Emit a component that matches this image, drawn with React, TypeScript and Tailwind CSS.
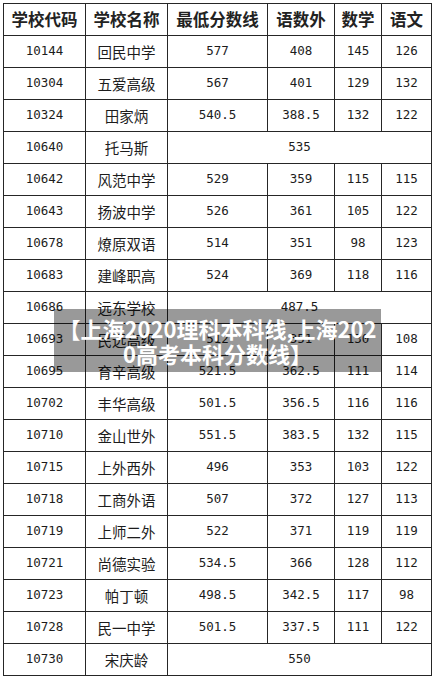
type Row = {
  code: string
  name: string
  total: string
  cem?: string
  math?: string
  chinese?: string
}

const rows: Row[] = [
  { code: '10144', name: '回民中学', total: '577', cem: '408', math: '145', chinese: '126' },
  { code: '10304', name: '五爱高级', total: '567', cem: '401', math: '129', chinese: '132' },
  { code: '10324', name: '田家炳', total: '540.5', cem: '388.5', math: '132', chinese: '122' },
  { code: '10640', name: '托马斯', total: '535' },
  { code: '10642', name: '风范中学', total: '529', cem: '359', math: '115', chinese: '115' },
  { code: '10643', name: '扬波中学', total: '526', cem: '361', math: '105', chinese: '122' },
  { code: '10678', name: '燎原双语', total: '514', cem: '351', math: '98', chinese: '123' },
  { code: '10683', name: '建峰职高', total: '524', cem: '369', math: '118', chinese: '116' },
  { code: '10686', name: '远东学校', total: '487.5' },
  { code: '10693', name: '民远高级', total: '512', cem: '351', math: '130', chinese: '108' },
  { code: '10695', name: '育辛高级', total: '521.5', cem: '362.5', math: '111', chinese: '114' },
  { code: '10702', name: '丰华高级', total: '501.5', cem: '356.5', math: '116', chinese: '116' },
  { code: '10710', name: '金山世外', total: '551.5', cem: '383.5', math: '132', chinese: '115' },
  { code: '10715', name: '上外西外', total: '496', cem: '353', math: '103', chinese: '122' },
  { code: '10718', name: '工商外语', total: '507', cem: '372', math: '127', chinese: '113' },
  { code: '10719', name: '上师二外', total: '522', cem: '371', math: '119', chinese: '119' },
  { code: '10721', name: '尚德实验', total: '534.5', cem: '366', math: '128', chinese: '112' },
  { code: '10723', name: '帕丁顿', total: '498.5', cem: '342.5', math: '117', chinese: '98' },
  { code: '10728', name: '民一中学', total: '501.5', cem: '337.5', math: '111', chinese: '122' },
  { code: '10730', name: '宋庆龄', total: '550' },
]

const headers = ['学校代码', '学校名称', '最低分数线', '语数外', '数学', '语文']

const cjk = "font-['Noto_Sans_CJK_SC',sans-serif]"
const mono = "font-['DejaVu_Sans_Mono',monospace]"

function Num({ v, span }: { v: string; span?: boolean }) {
  return (
    <div
      className={`bg-white flex items-center justify-center text-[12.5px] text-[#1c1c1c] ${mono} ${
        span ? 'col-span-4' : ''
      }`}
    >
      {v}
    </div>
  )
}

export default function App() {
  return (
    <div className="relative w-[436px] h-[681px] bg-white overflow-hidden">
      {/* 表格 */}
      <div className="p-[3px]">
        <div className="grid grid-cols-[81px_81px_99px_66px_46px_49px] auto-rows-[31px] gap-px p-px bg-[#262626] w-fit">
          {headers.map(h => (
            <div
              key={h}
              className={`bg-white flex items-center justify-center text-[16.5px] font-bold text-[#222] ${cjk}`}
            >
              {h}
            </div>
          ))}

          {rows.map(r => (
            <div key={r.code} className="contents">
              <Num v={r.code} />
              <div className={`bg-white flex items-center justify-center text-[14.5px] text-[#1c1c1c] ${cjk}`}>
                {r.name}
              </div>
              {r.cem ? (
                <>
                  <Num v={r.total} />
                  <Num v={r.cem} />
                  <Num v={r.math!} />
                  <Num v={r.chinese!} />
                </>
              ) : (
                <Num v={r.total} span />
              )}
            </div>
          ))}
        </div>
      </div>

      {/* 标题浮层 */}
      <div className="absolute left-[54px] top-[309px] w-[327px] h-[63px] bg-black/40 flex items-center justify-center">
        <p className={`text-white font-bold text-[22px] leading-[25px] text-center whitespace-nowrap ${cjk}`}>
          【上海2020理科本科线,上海202
          <br />
          0高考本科分数线】
        </p>
      </div>
    </div>
  )
}
